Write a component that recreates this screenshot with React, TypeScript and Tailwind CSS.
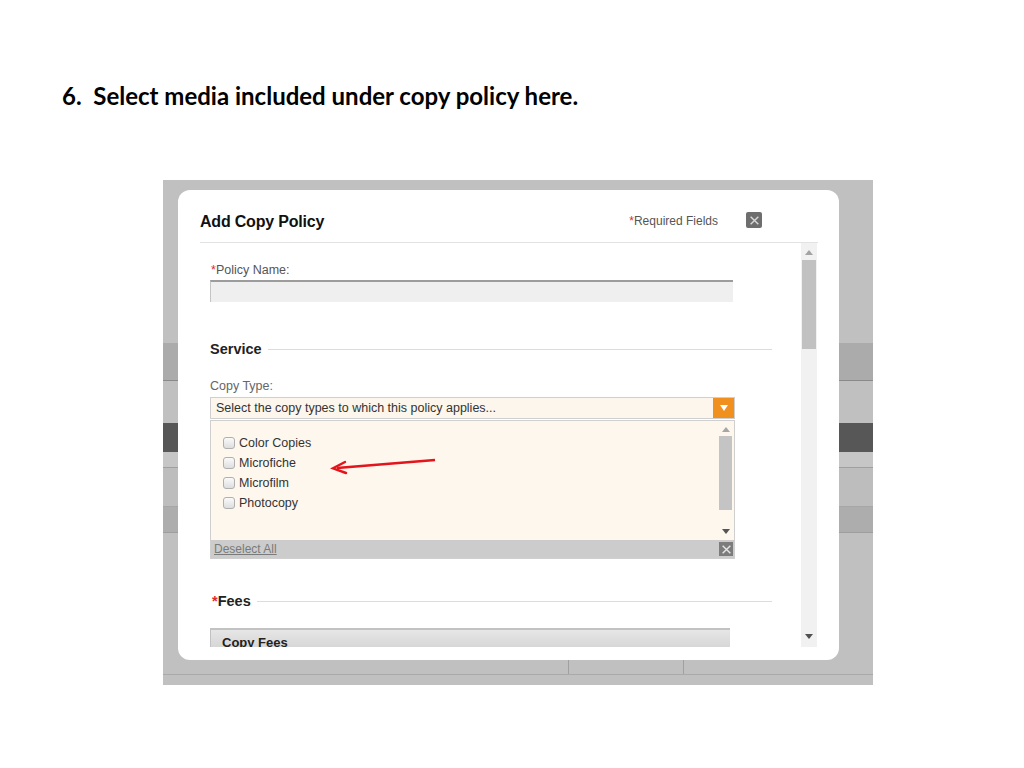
const copyTypes = ["Color Copies", "Microfiche", "Microfilm", "Photocopy"];

function Req() {
  return <span className="text-[#e0282e]">*</span>;
}

function Checkbox() {
  return (
    <span className="inline-block w-[12px] h-[12px] rounded-[3px] border border-[#b0b0b0] bg-gradient-to-b from-[#fafafa] to-[#dedede] shrink-0" />
  );
}

function CloseIcon({ size, color }: { size: number; color: string }) {
  return (
    <svg width={size} height={size} viewBox="0 0 10 10">
      <path d="M1.5 1.5l7 7M8.5 1.5l-7 7" stroke={color} strokeWidth="1.3" />
    </svg>
  );
}

function SectionTitle({ children, required }: { children: string; required?: boolean }) {
  return (
    <div className="flex items-center gap-[6px] pr-[29px]">
      <span className="text-[14.5px] font-bold text-[#222] leading-[16px] whitespace-nowrap">
        {required && <Req />}
        {children}
      </span>
      <span className="flex-1 h-px bg-[#dcdcdc]" />
    </div>
  );
}

function Dialog() {
  return (
    <div className="absolute left-[15px] top-[10px] w-[661px] h-[470px] bg-white rounded-[12px] flex flex-col">
      {/* header */}
      <div className="flex items-start h-[52px] pl-[22px] pr-[77px] pt-[22px]">
        <span className="text-[16px] font-bold text-[#111] leading-[20px] tracking-[-0.2px]">
          Add Copy Policy
        </span>
        <span className="ml-auto mt-[2px] text-[12px] text-[#555] leading-[14px]">
          <Req />
          Required Fields
        </span>
        <span className="ml-[28px] w-[16px] h-[16px] rounded-[2px] bg-[#6e6e6e] flex items-center justify-center">
          <CloseIcon size={11} color="#d8d8d8" />
        </span>
      </div>
      <div className="ml-[22px] mr-[21px] h-px bg-[#e2e2e2]" />

      {/* scrolling body */}
      <div className="flex ml-[22px] mr-[22px] h-[404px] overflow-hidden">
        <div className="flex-1 pl-[10px] pt-[20px]">
          <div className="text-[12.5px] leading-[14px] text-[#555] pl-px">
            <Req />
            Policy Name:
          </div>
          <div className="mt-[3px] w-[523px] h-[22px] bg-[#efefef] border-t-2 border-l border-[#9c9c9c] border-l-[#c4c4c4]" />

          <div className="mt-[39px]">
            <SectionTitle>Service</SectionTitle>
          </div>

          <div className="mt-[22px] text-[12.5px] leading-[14px] text-[#666]">Copy Type:</div>
          <div className="mt-[4px] w-[525px] h-[22px] flex border border-[#cfcfcf] bg-[#fcf6ec]">
            <span className="flex-1 pl-[5px] text-[12.5px] leading-[20px] text-[#333]">
              Select the copy types to which this policy applies...
            </span>
            <span className="w-[21px] h-full bg-[#f0901e] flex items-center justify-center">
              <svg width="10" height="8" viewBox="0 0 10 8">
                <path d="M1 1h8L5 7z" fill="#fff" />
              </svg>
            </span>
          </div>

          <div className="mt-[1px] w-[525px] border border-[#cfcfcf]">
            <div className="h-[119px] bg-[#fdf7ee] flex">
              <div className="flex-1 pl-[12px] pt-[15px] flex flex-col gap-[6px]">
                {copyTypes.map((t) => (
                  <label key={t} className="flex items-center gap-[4px] h-[14px]">
                    <Checkbox />
                    <span className="text-[12.5px] leading-[14px] text-[#333]">{t}</span>
                  </label>
                ))}
              </div>
              <div className="w-[15px] mr-px flex flex-col items-center pt-[6px] pb-[6px]">
                <svg width="8" height="5" viewBox="0 0 8 5">
                  <path d="M0 5h8L4 0z" fill="#a6a6a6" />
                </svg>
                <div className="mt-[4px] w-[13px] h-[74px] bg-[#c4c4c4]" />
                <div className="flex-1" />
                <svg width="8" height="5" viewBox="0 0 8 5">
                  <path d="M0 0h8L4 5z" fill="#555" />
                </svg>
              </div>
            </div>
            <div className="h-[18px] bg-[#cccccc] flex items-center pl-[3px] pr-px">
              <span className="text-[12px] leading-[14px] text-[#7a7a7a] underline">Deselect All</span>
              <span className="ml-auto w-[14px] h-[14px] bg-[#7c7c7c] flex items-center justify-center">
                <CloseIcon size={11} color="#e5e5e5" />
              </span>
            </div>
          </div>

          <div className="mt-[34px] pl-[2px]">
            <SectionTitle required>Fees</SectionTitle>
          </div>

          <div className="mt-[19px] w-[520px] h-[24px] bg-gradient-to-b from-[#e6e6e6] to-[#d2d2d2] border-t-2 border-l border-[#c2c2c2] pl-[11px]">
            <span className="text-[13px] font-bold leading-[22px] text-[#222]">Copy Fees</span>
          </div>
        </div>

        {/* page scrollbar */}
        <div className="w-[16px] bg-[#f1f1f1] flex flex-col items-center pt-[7px] pb-[8px]">
          <svg width="8" height="5" viewBox="0 0 8 5">
            <path d="M0 5h8L4 0z" fill="#a3a3a3" />
          </svg>
          <div className="mt-[5px] w-[14px] h-[89px] bg-[#c1c1c1]" />
          <div className="flex-1" />
          <svg width="8" height="5" viewBox="0 0 8 5">
            <path d="M0 0h8L4 5z" fill="#505050" />
          </svg>
        </div>
      </div>
    </div>
  );
}

function Screenshot() {
  return (
    <div className="relative ml-[163px] w-[710px] h-[505px] bg-[#c0c0c0] overflow-hidden">
      {/* page behind the dialog */}
      <div className="flex flex-col">
        <div className="h-[163px]" />
        <div className="h-[38px] bg-[#ababab] border-b border-[#8a8a8a]" />
        <div className="h-[42px] bg-[#c0c0c0]" />
        <div className="h-[29px] bg-[#575757]" />
        <div className="h-[16px] bg-[#c6c6c6] border-b border-[#a0a0a0]" />
        <div className="h-[39px] bg-[#bdbdbd] border-b border-[#a6a6a6]" />
        <div className="h-[26px] bg-[#adadad] border-b border-[#9e9e9e]" />
      </div>
      <div className="absolute left-0 right-0 top-[480px] h-[15px] flex border-b border-[#aaaaaa]">
        <span className="w-[406px] border-r border-[#a0a0a0]" />
        <span className="w-[115px] border-r border-[#a0a0a0]" />
      </div>

      <Dialog />

      {/* annotation arrow */}
      <svg
        className="absolute left-[160px] top-[270px]"
        width="120"
        height="30"
        viewBox="0 0 120 30"
      >
        <line x1="112" y1="10" x2="14" y2="18" stroke="#e3141b" strokeWidth="2.4" />
        <path d="M22 12 L10 18.3 L23 23" fill="none" stroke="#e3141b" strokeWidth="2.4" strokeLinecap="round" />
      </svg>
    </div>
  );
}

export default function App() {
  return (
    <div className="w-[1024px] h-[768px] bg-white overflow-hidden" style={{ fontFamily: "'Liberation Sans', Arial, sans-serif" }}>
      <h1
        className="pt-[81px] pl-[62px] text-[24px] font-bold leading-[30px] text-black whitespace-pre"
        style={{ fontFamily: "Lato, 'Open Sans', sans-serif" }}
      >
        {"6.  Select media included under copy policy here."}
      </h1>
      <div className="h-[69px]" />
      <Screenshot />
    </div>
  );
}
